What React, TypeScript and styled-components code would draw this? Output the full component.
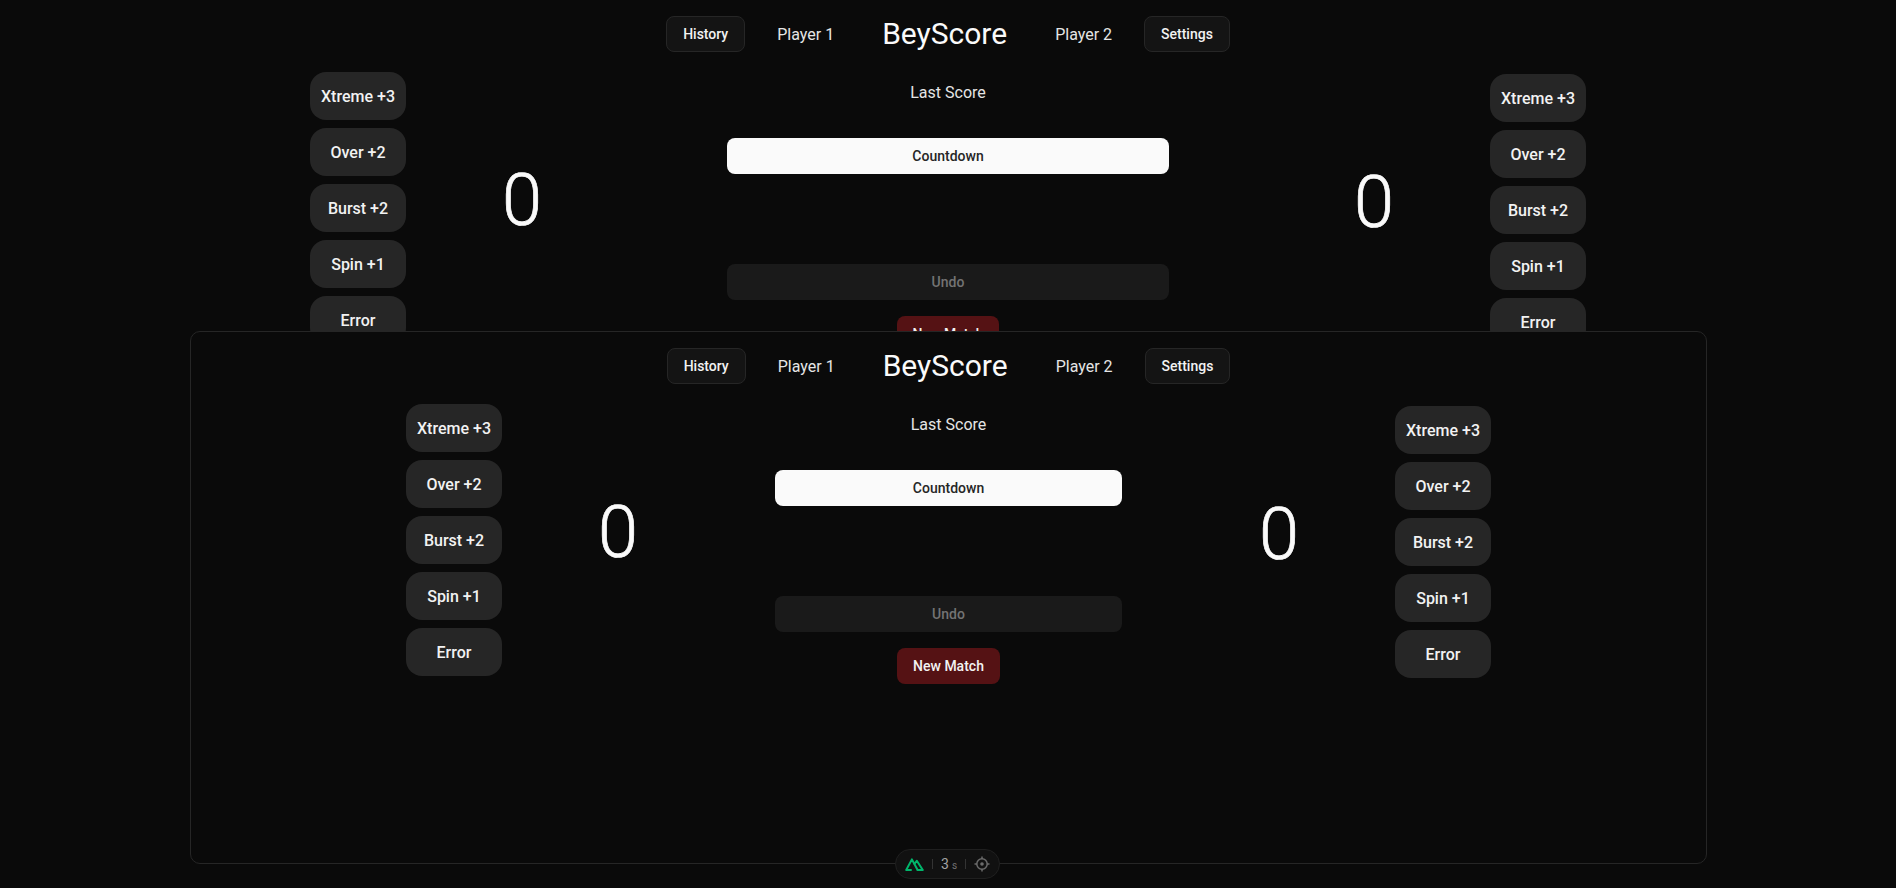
import styled, { createGlobalStyle } from "styled-components";

const GlobalStyle = createGlobalStyle`
  html, body {
    margin: 0;
    height: 100%;
    background: #0a0a0a;
    color: #fafafa;
    font-family: Roboto, "Liberation Sans", sans-serif;
    overflow: hidden;
  }
`;

const SCORE_BUTTONS = ["Xtreme +3", "Over +2", "Burst +2", "Spin +1", "Error"];

// the same screen is drawn twice: the page, and the preview frame on top of it
const Scoreboard = ({ sidePadding, centerWidth }: { sidePadding: number; centerWidth: number }) => (
  <Screen>
    <Header>
      <HeaderButton>History</HeaderButton>
      <PlayerName>Player 1</PlayerName>
      <Title>BeyScore</Title>
      <PlayerName>Player 2</PlayerName>
      <HeaderButton>Settings</HeaderButton>
    </Header>
    <Board $sidePadding={sidePadding} $centerWidth={centerWidth}>
      <ScoreColumn>
        {SCORE_BUTTONS.map((label) => (
          <ScoreButton key={label}>{label}</ScoreButton>
        ))}
      </ScoreColumn>
      <Score>0</Score>
      <Center>
        <LastScore>Last Score</LastScore>
        <CountdownButton>Countdown</CountdownButton>
        <UndoButton disabled>Undo</UndoButton>
        <NewMatchButton>New Match</NewMatchButton>
      </Center>
      <Score $right>0</Score>
      <ScoreColumn $right>
        {SCORE_BUTTONS.map((label) => (
          <ScoreButton key={label}>{label}</ScoreButton>
        ))}
      </ScoreColumn>
    </Board>
  </Screen>
);

export default function App() {
  return (
    <Page>
      <GlobalStyle />
      <Scoreboard sidePadding={310} centerWidth={442} />
      <PreviewFrame>
        <Scoreboard sidePadding={215} centerWidth={347} />
      </PreviewFrame>
      <DevPill>
        <svg width="19" height="13" viewBox="0 0 19 13" fill="none" stroke="#00b56b" strokeWidth="2" strokeLinejoin="round" strokeLinecap="round">
          <path d="M6 12H1.2L6.9 1.4L12.6 12" />
          <path d="M9.4 5.8L11.8 2.8L17.8 12H12.6" />
        </svg>
        <PillDivider />
        <PillTime>
          3<PillUnit>s</PillUnit>
        </PillTime>
        <PillDivider />
        <svg width="16" height="16" viewBox="0 0 16 16" fill="none" stroke="#6b6b6b" strokeWidth="1.5">
          <circle cx="8" cy="8" r="5.2" />
          <circle cx="8" cy="8" r="1.8" fill="#6b6b6b" stroke="none" />
          <path d="M8 0.5V3M8 13V15.5M0.5 8H3M13 8H15.5" />
        </svg>
      </DevPill>
    </Page>
  );
}

const Page = styled.div`
  position: relative;
  height: 888px;
  overflow: hidden;
  background: #0a0a0a;
`;

const Screen = styled.div`
  padding-top: 16px;
`;

const Header = styled.header`
  display: flex;
  justify-content: center;
  align-items: center;
  gap: 32px;
  height: 36px;
`;

const HeaderButton = styled.button`
  height: 36px;
  padding: 0 16px;
  font: 500 14px Roboto, sans-serif;
  color: #f2f2f2;
  background: #141414;
  border: 1px solid #262626;
  border-radius: 8px;
`;

const PlayerName = styled.span`
  font-size: 16px;
  line-height: 24px;
  padding-top: 1px;
  color: #e5e5e5;
`;

const Title = styled.h1`
  margin: 0 16px;
  font-size: 30px;
  line-height: 36px;
  font-weight: 400;
`;

const Board = styled.main<{ $sidePadding: number; $centerWidth: number }>`
  display: grid;
  grid-template-columns: 96px 1fr ${(p) => p.$centerWidth}px 1fr 96px;
  align-items: start;
  margin-top: 20px;
  padding: 0 ${(p) => p.$sidePadding}px;
`;

const ScoreColumn = styled.div<{ $right?: boolean }>`
  display: flex;
  flex-direction: column;
  gap: 8px;
  margin-top: ${(p) => (p.$right ? "2px" : "0")};
`;

const ScoreButton = styled.button`
  height: 48px;
  padding: 0;
  font: 500 16px Roboto, sans-serif;
  color: #f2f2f2;
  background: #262626;
  border: none;
  border-radius: 16px;
`;

const Score = styled.div<{ $right?: boolean }>`
  justify-self: ${(p) => (p.$right ? "end" : "start")};
  margin: ${(p) => (p.$right ? "95px 96px 0 0" : "93px 0 0 96px")};
  font-size: 72px;
  line-height: 72px;
  font-weight: 300;
  -webkit-text-stroke: 0.7px #fafafa;
`;

const Center = styled.div`
  display: flex;
  flex-direction: column;
  align-items: center;
`;

const LastScore = styled.div`
  margin-top: 9px;
  font-size: 16px;
  line-height: 24px;
  color: #e5e5e5;
`;

const WideButton = styled.button`
  width: 100%;
  height: 36px;
  font: 500 14px Roboto, sans-serif;
  border: none;
  border-radius: 8px;
`;

const CountdownButton = styled(WideButton)`
  margin-top: 33px;
  color: #262626;
  background: #fafafa;
`;

const UndoButton = styled(WideButton)`
  margin-top: 90px;
  color: #737373;
  background: #1a1a1a;
`;

const NewMatchButton = styled.button`
  height: 36px;
  margin-top: 16px;
  padding: 0 16px;
  font: 500 14px Roboto, sans-serif;
  color: #f2f2f2;
  background: #551214;
  border: none;
  border-radius: 8px;
`;

const PreviewFrame = styled.div`
  position: absolute;
  top: 331px;
  left: 190px;
  box-sizing: border-box;
  width: 1517px;
  height: 533px;
  background: #0a0a0a;
  border: 1px solid #262626;
  border-radius: 10px;
`;

const DevPill = styled.div`
  position: absolute;
  top: 849px;
  left: 895px;
  box-sizing: border-box;
  display: flex;
  align-items: center;
  gap: 8px;
  width: 105px;
  height: 30px;
  padding-left: 9px;
  background: #111111;
  border: 1px solid #1f1f1f;
  border-radius: 15px;
`;

const PillDivider = styled.span`
  width: 1px;
  height: 10px;
  background: #333333;
`;

const PillTime = styled.span`
  padding-top: 1px;
  font-size: 14px;
  line-height: 16px;
  color: #a3a3a3;
`;

const PillUnit = styled.span`
  margin-left: 3px;
  font-size: 10px;
  color: #737373;
`;
